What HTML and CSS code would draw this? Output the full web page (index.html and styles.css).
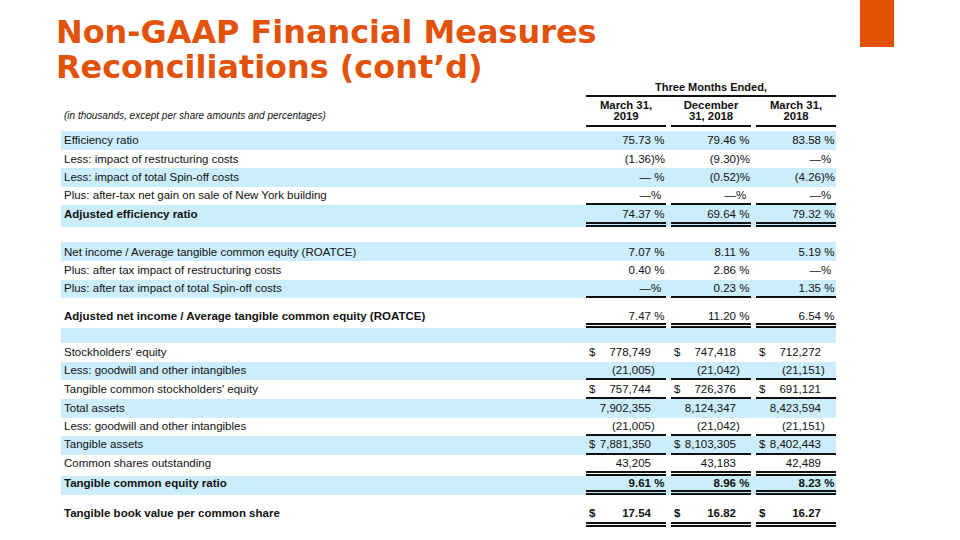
FILE: index.html
```html
<!DOCTYPE html>
<html lang="en">
<head>
<meta charset="utf-8">
<title>Non-GAAP Financial Measures Reconciliations (cont'd)</title>
<link rel="stylesheet" href="styles.css">
</head>
<body>
<div class="slide">
  <header class="top">
    <h1 class="title">Non-GAAP Financial Measures<br>Reconciliations (cont’d)</h1>
    <div class="accent"></div>
  </header>

  <section class="table">
    <div class="row period"><div class="span">Three Months Ended,</div></div>
    <div class="row head">
      <div class="note">(in thousands, except per share amounts and percentages)</div>
      <div class="h">March 31,<br>2019</div>
      <div class="h">December<br>31, 2018</div>
      <div class="h">March 31,<br>2018</div>
    </div>
    <div class="spacer"></div>

    <div class="row b">
      <div class="c lbl">Efficiency ratio</div>
      <div class="c v"><span class="n">75.73</span><span class="sx"> %</span></div>
      <div class="c v"><span class="n">79.46</span><span class="sx"> %</span></div>
      <div class="c v"><span class="n">83.58</span><span class="sx"> %</span></div>
    </div>
    <div class="row">
      <div class="c lbl">Less: impact of restructuring costs</div>
      <div class="c v"><span class="n">(1.36</span><span class="sx">)%</span></div>
      <div class="c v"><span class="n">(9.30</span><span class="sx">)%</span></div>
      <div class="c v"><span class="n">—</span><span class="sx">%</span></div>
    </div>
    <div class="row b">
      <div class="c lbl">Less: impact of total Spin-off costs</div>
      <div class="c v"><span class="n">—</span><span class="sx"> %</span></div>
      <div class="c v"><span class="n">(0.52</span><span class="sx">)%</span></div>
      <div class="c v"><span class="n">(4.26</span><span class="sx">)%</span></div>
    </div>
    <div class="row sl">
      <div class="c lbl">Plus: after-tax net gain on sale of New York building</div>
      <div class="c v"><span class="n">—</span><span class="sx">%</span></div>
      <div class="c v"><span class="n">—</span><span class="sx">%</span></div>
      <div class="c v"><span class="n">—</span><span class="sx">%</span></div>
    </div>
    <div class="row b dl h22">
      <div class="c lbl strong">Adjusted efficiency ratio</div>
      <div class="c v"><span class="n">74.37</span><span class="sx"> %</span></div>
      <div class="c v"><span class="n">69.64</span><span class="sx"> %</span></div>
      <div class="c v"><span class="n">79.32</span><span class="sx"> %</span></div>
    </div>
    <div class="row h15"></div>

    <div class="row b">
      <div class="c lbl">Net income / Average tangible common equity (ROATCE)</div>
      <div class="c v"><span class="n">7.07</span><span class="sx"> %</span></div>
      <div class="c v"><span class="n">8.11</span><span class="sx"> %</span></div>
      <div class="c v"><span class="n">5.19</span><span class="sx"> %</span></div>
    </div>
    <div class="row">
      <div class="c lbl">Plus: after tax impact of restructuring costs</div>
      <div class="c v"><span class="n">0.40</span><span class="sx"> %</span></div>
      <div class="c v"><span class="n">2.86</span><span class="sx"> %</span></div>
      <div class="c v"><span class="n">—</span><span class="sx">%</span></div>
    </div>
    <div class="row b sl">
      <div class="c lbl">Plus: after tax impact of total Spin-off costs</div>
      <div class="c v"><span class="n">—</span><span class="sx">%</span></div>
      <div class="c v"><span class="n">0.23</span><span class="sx"> %</span></div>
      <div class="c v"><span class="n">1.35</span><span class="sx"> %</span></div>
    </div>
    <div class="row dl tall">
      <div class="c lbl strong">Adjusted net income / Average tangible common equity (ROATCE)</div>
      <div class="c v"><span class="n">7.47</span><span class="sx"> %</span></div>
      <div class="c v"><span class="n">11.20</span><span class="sx"> %</span></div>
      <div class="c v"><span class="n">6.54</span><span class="sx"> %</span></div>
    </div>
    <div class="row b h15"></div>

    <div class="row">
      <div class="c lbl">Stockholders' equity</div>
      <div class="c v"><span class="cur">$</span><span class="n">778,749</span><span class="sx"></span></div>
      <div class="c v"><span class="cur">$</span><span class="n">747,418</span><span class="sx"></span></div>
      <div class="c v"><span class="cur">$</span><span class="n">712,272</span><span class="sx"></span></div>
    </div>
    <div class="row b sl">
      <div class="c lbl">Less: goodwill and other intangibles</div>
      <div class="c v"><span class="n">(21,005</span><span class="sx">)</span></div>
      <div class="c v"><span class="n">(21,042</span><span class="sx">)</span></div>
      <div class="c v"><span class="n">(21,151</span><span class="sx">)</span></div>
    </div>
    <div class="row sl">
      <div class="c lbl">Tangible common stockholders' equity</div>
      <div class="c v"><span class="cur">$</span><span class="n">757,744</span><span class="sx"></span></div>
      <div class="c v"><span class="cur">$</span><span class="n">726,376</span><span class="sx"></span></div>
      <div class="c v"><span class="cur">$</span><span class="n">691,121</span><span class="sx"></span></div>
    </div>
    <div class="row b">
      <div class="c lbl">Total assets</div>
      <div class="c v"><span class="n">7,902,355</span><span class="sx"></span></div>
      <div class="c v"><span class="n">8,124,347</span><span class="sx"></span></div>
      <div class="c v"><span class="n">8,423,594</span><span class="sx"></span></div>
    </div>
    <div class="row sl">
      <div class="c lbl">Less: goodwill and other intangibles</div>
      <div class="c v"><span class="n">(21,005</span><span class="sx">)</span></div>
      <div class="c v"><span class="n">(21,042</span><span class="sx">)</span></div>
      <div class="c v"><span class="n">(21,151</span><span class="sx">)</span></div>
    </div>
    <div class="row b sl">
      <div class="c lbl">Tangible assets</div>
      <div class="c v"><span class="cur">$</span><span class="n">7,881,350</span><span class="sx"></span></div>
      <div class="c v"><span class="cur">$</span><span class="n">8,103,305</span><span class="sx"></span></div>
      <div class="c v"><span class="cur">$</span><span class="n">8,402,443</span><span class="sx"></span></div>
    </div>
    <div class="row dl h21">
      <div class="c lbl">Common shares outstanding</div>
      <div class="c v"><span class="n">43,205</span><span class="sx"></span></div>
      <div class="c v"><span class="n">43,183</span><span class="sx"></span></div>
      <div class="c v"><span class="n">42,489</span><span class="sx"></span></div>
    </div>
    <div class="row b dl bold h19">
      <div class="c lbl">Tangible common equity ratio</div>
      <div class="c v"><span class="n">9.61</span><span class="sx"> %</span></div>
      <div class="c v"><span class="n">8.96</span><span class="sx"> %</span></div>
      <div class="c v"><span class="n">8.23</span><span class="sx"> %</span></div>
    </div>
    <div class="row h8"></div>
    <div class="row dl bold h24">
      <div class="c lbl">Tangible book value per common share</div>
      <div class="c v"><span class="cur">$</span><span class="n">17.54</span><span class="sx"></span></div>
      <div class="c v"><span class="cur">$</span><span class="n">16.82</span><span class="sx"></span></div>
      <div class="c v"><span class="cur">$</span><span class="n">16.27</span><span class="sx"></span></div>
    </div>
  </section>
</div>
</body>
</html>
```

FILE: styles.css
```css
html, body {
  margin: 0;
  padding: 0;
  background: #ffffff;
}

body {
  font-family: "Liberation Sans", Arial, sans-serif;
  color: #111111;
}

.slide {
  width: 960px;
  height: 540px;
  overflow: hidden;
  background: #ffffff;
}

/* ---------- header ---------- */
.top {
  display: flex;
  align-items: flex-start;
  height: 85px;
}

.title {
  margin: 15px 0 0 56px;
  font-family: "DejaVu Sans", Verdana, sans-serif;
  font-weight: bold;
  font-size: 31.9px;
  line-height: 35px;
  color: #e2520a;
  white-space: nowrap;
}

.accent {
  margin-left: auto;
  margin-right: 66px;
  width: 34px;
  height: 47px;
  background: #e35205;
}

/* ---------- table ---------- */
.table {
  margin: -6px 0 0 61px;
  width: 775px;
}

.row {
  display: grid;
  grid-template-columns: 520px 80px 80px 80px;
  column-gap: 5px;
  height: 18.6px;
  font-size: 11.5px;
}

.row.b {
  background: #ccedfb;
}

.period,
.head {
  height: auto;
}

.period .span {
  grid-column: 2 / 5;
  text-align: center;
  font-weight: bold;
  font-size: 11px;
  line-height: 14px;
  padding: 1px 0 1px;
  border-bottom: 2px solid #111;
}

.head .h {
  text-align: center;
  font-weight: bold;
  font-size: 11.3px;
  line-height: 11px;
  padding: 3px 0 3px;
  border-bottom: 2px solid #111;
}

.head .note {
  align-self: end;
  padding: 0 0 5px 3px;
  font-style: italic;
  font-size: 10px;
  line-height: 12px;
}

.spacer {
  height: 4px;
}

.c {
  box-sizing: border-box;
  height: 100%;
  display: flex;
  align-items: center;
  white-space: nowrap;
}

.lbl {
  padding-left: 3px;
}

.strong,
.bold .c {
  font-weight: bold;
}

.v {
  display: grid;
  grid-template-columns: 10px 1fr 14px;
  align-items: center;
  padding: 0 1px 0 3px;
}

.v .cur {
  grid-column: 1;
}

.v .n {
  grid-column: 2;
  text-align: right;
}

.v .sx {
  grid-column: 3;
  white-space: pre;
}

/* rules under values */
.sl .c {
  border-bottom: 2px solid #111;
}

.dl .c {
  border-bottom: 5px double #111;
}

.sl .lbl,
.dl .lbl {
  border-bottom-color: transparent;
}

.tall {
  height: 30px;
}

.tall .c {
  padding-top: 10px;
}

.h22 { height: 22px; }
.h15 { height: 15px; }
.h21 { height: 21px; }
.h19 { height: 19.5px; }
.h8 { height: 8px; }
.h24 { height: 23.6px; }
```
